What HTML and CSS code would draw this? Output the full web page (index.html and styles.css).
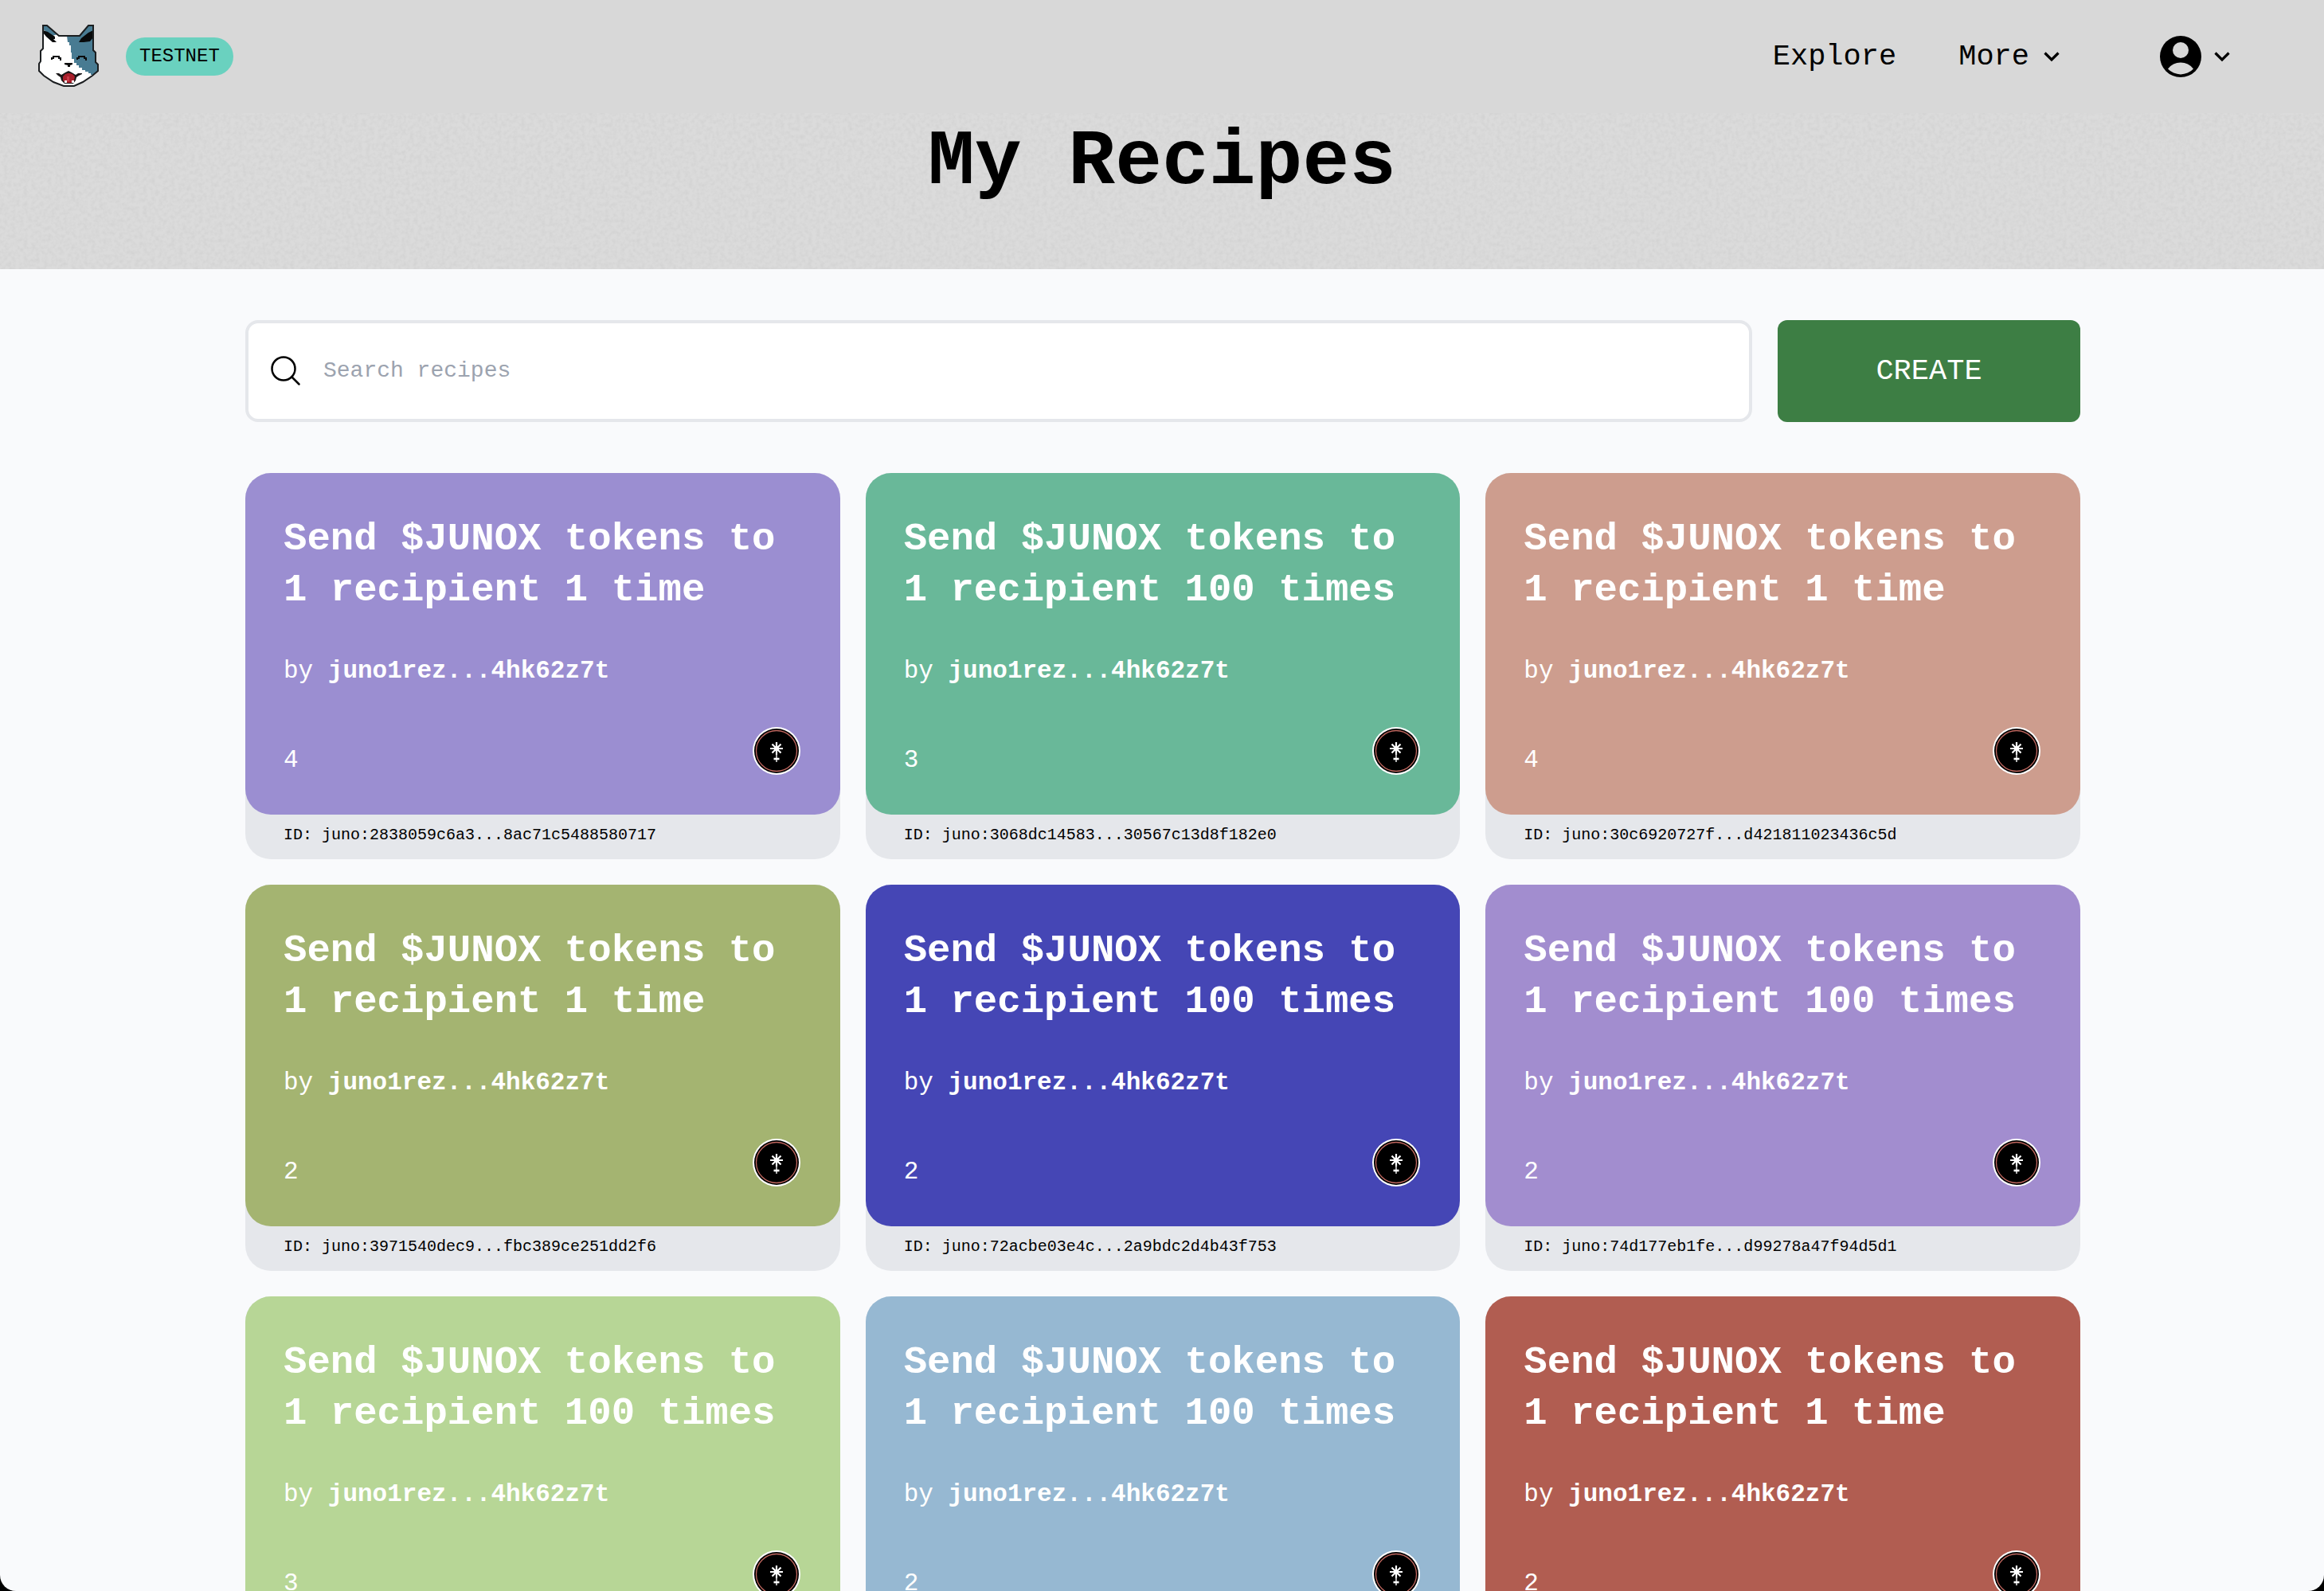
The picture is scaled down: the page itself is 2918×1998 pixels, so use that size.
FILE: index.html
```
<!DOCTYPE html>
<html lang="en">
<head>
<meta charset="utf-8">
<meta name="viewport" content="width=device-width, initial-scale=1">
<title>My Recipes</title>
<link rel="stylesheet" href="styles.css">
</head>
<body>
<svg class="defs" aria-hidden="true">
  <symbol id="chevron" viewBox="0 0 20 14"><path d="M1.500 2.500l8.500 8.500 8.500-8.500" fill="none" stroke="currentColor" stroke-width="3.200"/></symbol>
  <symbol id="juno" viewBox="0 0 60 60">
    <circle cx="30" cy="30" r="30" fill="#fff"/>
    <circle cx="30" cy="30" r="28" fill="#000"/>
    <circle cx="30" cy="30" r="25.500" fill="none" stroke="#c0675f" stroke-width="1.300"/>
    <path d="M30 19v16M22 27h16M24.500 21.500l11 11M35.500 21.500l-11 11" stroke="#fff" stroke-width="2.200"/>
    <circle cx="30" cy="27" r="3.200" fill="#fff"/>
    <path d="M30 33v11" stroke="#ddd" stroke-width="1.600"/>
    <path d="M26.500 40h7" stroke="#fff" stroke-width="2.600"/>
  </symbol>
</svg>
<header class="hero">
  <svg class="grain" aria-hidden="true"><filter id="grain" x="0" y="0" width="100%" height="100%"><feTurbulence type="fractalNoise" baseFrequency="0.2" numOctaves="2" seed="4"/><feColorMatrix values="0 0 0 0 0.5  0 0 0 0 0.5  0 0 0 0 0.5  0.5 0 0 0 -0.18"/></filter><rect width="100%" height="100%" filter="url(#grain)"/></svg>
  <nav class="nav">
    <div class="brand">
      <a href="#" aria-label="Home"><svg class="logo" viewBox="0 0 80 80">
        <path d="M8 1h5l15 13h26l11-13h6v31l3 3v12l3 3v8l-7 6-12 8-11 5H34l-13-5-12-8-6-6v-9l2-3V33l3-3z" fill="#fff"/>
        <path d="M38 14h16l11-13h6v31l3 3v12l3 3v8l-6 5h-3v-2h-3v-2h-4v-2h-4v-3h-4v-3h-3v-3h-3v-5h-3v-8h-1V26h-2v-4h-2z" fill="#487b92"/>
        <path d="M8 2h6l6 6 6 4-6 2-12-8z" fill="#487b92"/>
        <path d="M8 7l6 2 9 6v3h-2l4 4h-5l-8-7-4-5zM71 7l-6 3-9 7-3 5h6l8-1 4-5z" fill="#080a0b"/>
        <path d="M8 1h5l15 13h26l11-13h6v31l3 3v12l3 3v8l-7 6-12 8-11 5H34l-13-5-12-8-6-6v-9l2-3V33l3-3z" fill="none" stroke="#1b1e20" stroke-width="2"/>
        <path d="M19 44v-2h2v-2h7v2h2v3M51 44v-2h2v-2h7v2h2v3" fill="none" stroke="#0b0c0d" stroke-width="2"/>
        <path d="M35 48h10v2l-3 1v2h-3v-2l-4-1z" fill="#0b0c0d"/>
        <path d="M24 61h4l3 2 5-3 4-2 4 2 5 3 3-2h5v1l-4 2-3 2-1 4-3 4H35l-4-4-1-4-3-2z" fill="#191617"/>
        <path d="M33 65l3-3 3-1h3l3 1 3 3-1 6-3 2h-8l-3-3z" fill="#a81f2b"/>
        <path d="M38 65h3v6h-3z" fill="#c93a48"/>
        <path d="M35 70h3v3h-3zM44 70h3v3h-3z" fill="#fff"/>
      </svg></a>
      <span class="badge">TESTNET</span>
    </div>
    <div class="links">
      <a class="link" href="#">Explore</a>
      <button class="link more" type="button">More <svg class="chevron"><use href="#chevron"/></svg></button>
      <button class="link account" type="button" aria-label="Account">
        <svg class="avatar" viewBox="0 0 52 52"><circle cx="26" cy="26" r="26"/><circle cx="26" cy="18" r="10" fill="#d8d8d8"/><path d="M10 41.500a20 20 0 0 1 32 0 22 22 0 0 1-32 0z" fill="#d8d8d8"/></svg>
        <svg class="chevron"><use href="#chevron"/></svg>
      </button>
    </div>
  </nav>
  <h1 class="title">My Recipes</h1>
</header>
<main class="page">
  <form class="toolbar">
    <label class="search">
      <svg class="search-icon" viewBox="0 0 38 38"><g fill="none" stroke="#000" stroke-width="2.500" stroke-linecap="round"><circle cx="16" cy="16" r="14.500"/><path d="M26.500 26.500l9 9"/></g></svg>
      <input class="search-input" type="search" placeholder="Search recipes" aria-label="Search recipes">
    </label>
    <button class="create" type="button">CREATE</button>
  </form>
  <section class="grid">
    <article class="card"><div class="face purple"><h2>Send $JUNOX tokens to 1 recipient 1 time</h2><p class="author">by <b>juno1rez...4hk62z7t</b></p><div class="foot"><span>4</span><svg class="token"><use href="#juno"/></svg></div></div><p class="id">ID: juno:2838059c6a3...8ac71c5488580717</p></article>
    <article class="card"><div class="face teal"><h2>Send $JUNOX tokens to 1 recipient 100 times</h2><p class="author">by <b>juno1rez...4hk62z7t</b></p><div class="foot"><span>3</span><svg class="token"><use href="#juno"/></svg></div></div><p class="id">ID: juno:3068dc14583...30567c13d8f182e0</p></article>
    <article class="card"><div class="face salmon"><h2>Send $JUNOX tokens to 1 recipient 1 time</h2><p class="author">by <b>juno1rez...4hk62z7t</b></p><div class="foot"><span>4</span><svg class="token"><use href="#juno"/></svg></div></div><p class="id">ID: juno:30c6920727f...d421811023436c5d</p></article>
    <article class="card"><div class="face olive"><h2>Send $JUNOX tokens to 1 recipient 1 time</h2><p class="author">by <b>juno1rez...4hk62z7t</b></p><div class="foot"><span>2</span><svg class="token"><use href="#juno"/></svg></div></div><p class="id">ID: juno:3971540dec9...fbc389ce251dd2f6</p></article>
    <article class="card"><div class="face indigo"><h2>Send $JUNOX tokens to 1 recipient 100 times</h2><p class="author">by <b>juno1rez...4hk62z7t</b></p><div class="foot"><span>2</span><svg class="token"><use href="#juno"/></svg></div></div><p class="id">ID: juno:72acbe03e4c...2a9bdc2d4b43f753</p></article>
    <article class="card"><div class="face violet"><h2>Send $JUNOX tokens to 1 recipient 100 times</h2><p class="author">by <b>juno1rez...4hk62z7t</b></p><div class="foot"><span>2</span><svg class="token"><use href="#juno"/></svg></div></div><p class="id">ID: juno:74d177eb1fe...d99278a47f94d5d1</p></article>
    <article class="card"><div class="face green"><h2>Send $JUNOX tokens to 1 recipient 100 times</h2><p class="author">by <b>juno1rez...4hk62z7t</b></p><div class="foot"><span>3</span><svg class="token"><use href="#juno"/></svg></div></div></article>
    <article class="card"><div class="face blue"><h2>Send $JUNOX tokens to 1 recipient 100 times</h2><p class="author">by <b>juno1rez...4hk62z7t</b></p><div class="foot"><span>2</span><svg class="token"><use href="#juno"/></svg></div></div></article>
    <article class="card"><div class="face red"><h2>Send $JUNOX tokens to 1 recipient 1 time</h2><p class="author">by <b>juno1rez...4hk62z7t</b></p><div class="foot"><span>2</span><svg class="token"><use href="#juno"/></svg></div></div></article>
  </section>
</main>
<div class="window-frame" aria-hidden="true"></div>
</body>
</html>
```
FILE: styles.css
```
* { box-sizing: border-box; }
html { scrollbar-width: none; }
body {
  margin: 0;
  background: #f9fafc;
  color: #000;
  font-family: "Liberation Mono", monospace;
}
h1, h2, p { margin: 0; }
a { color: inherit; text-decoration: none; }
button, input { font: inherit; color: inherit; border: 0; background: none; padding: 0; }
svg { display: block; flex: none; }
.defs { position: absolute; width: 0; height: 0; }

.hero { position: relative; background: #dbdbdb; padding-bottom: 72px; overflow: hidden; }
.grain { position: absolute; inset: 0; width: 100%; height: 100%; }
.nav {
  position: relative;
  display: flex;
  justify-content: space-between;
  align-items: center;
  height: 142px;
  padding: 0 118px 0 46px;
  background: #d8d8d8;
}
.brand { display: flex; align-items: center; gap: 32px; }
.logo { width: 80px; height: 80px; }
.badge {
  padding: 0 17px;
  border-radius: 24px;
  background: #6ad1bf;
  font-size: 24px;
  line-height: 48px;
}
.links { display: flex; align-items: center; font-size: 37px; line-height: 56px; }
.link { display: flex; align-items: center; }
.more { margin-left: 78px; gap: 18px; }
.account { margin-left: 126px; gap: 16px; }
.chevron { width: 20px; height: 14px; }
.avatar { width: 52px; height: 52px; }
.title {
  position: relative;
  font-size: 98px;
  line-height: 124px;
  text-align: center;
}

.page { max-width: 2306px; margin: 0 auto; padding: 64px 0 64px 2px; }
.toolbar { display: flex; gap: 32px; margin-bottom: 64px; }
.search {
  flex: 1;
  display: flex;
  align-items: center;
  gap: 28px;
  height: 128px;
  padding: 0 28px;
  border: 4px solid #e5e7eb;
  border-radius: 16px;
  background: #fff;
}
.search-icon { width: 38px; height: 38px; }
.search-input { flex: 1; font-size: 28px; line-height: 40px; outline: 0; }
.search-input::placeholder { color: #9ca3af; opacity: 1; }
.create {
  width: 380px;
  border-radius: 12px;
  background: #3d7e44;
  color: #fff;
  font-size: 37px;
}

.grid { display: grid; grid-template-columns: repeat(3, 1fr); gap: 32px; }
.card { border-radius: 32px; background: #e5e7eb; }
.face {
  padding: 51px 48px 48px;
  border-radius: 32px;
  color: #fff;
  font-size: 31px;
}
.face h2 { font-size: 49px; line-height: 64px; }
.author { margin-top: 46px; line-height: 48px; }
.foot {
  display: flex;
  align-items: flex-end;
  justify-content: space-between;
  margin-top: 46px;
  padding: 0 2px 2px 0;
  line-height: 36px;
}
.token { width: 60px; height: 60px; }
.id { padding: 0 48px 4px; font-size: 20px; line-height: 52px; }
.purple { background: #9b8ed1; }
.teal { background: #69b899; }
.salmon { background: #cd9d8e; }
.olive { background: #a4b471; }
.indigo { background: #4546b5; }
.violet { background: #a28dcf; }
.green { background: #b7d696; }
.blue { background: #96b8d2; }
.red { background: #b15d51; }

.window-frame {
  position: fixed;
  inset: 0;
  border-radius: 0 0 20px 20px;
  box-shadow: 0 0 0 30px #000;
  pointer-events: none;
}
```
